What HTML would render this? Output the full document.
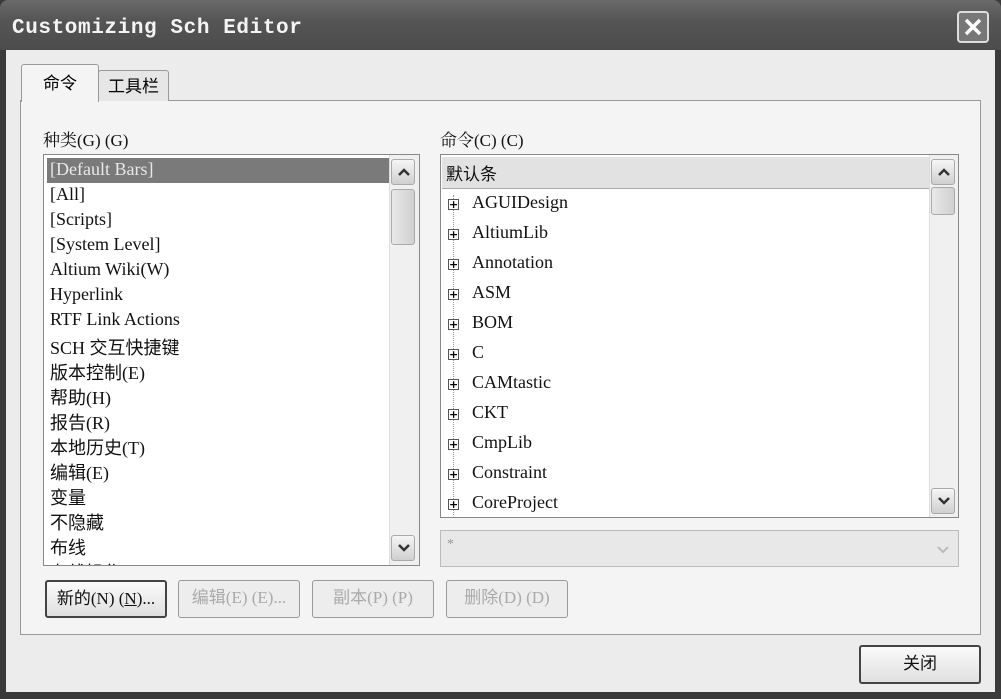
<!DOCTYPE html>
<html><head><meta charset="utf-8"><style>
*{box-sizing:border-box;margin:0;padding:0}
body{width:1001px;height:699px;background:#3a3a3a;font-family:"Liberation Serif","Noto Serif CJK SC",serif;position:relative;overflow:hidden}
.abs{position:absolute}
#title{left:0;top:0;width:1001px;height:50px;background:linear-gradient(#6a6a6a,#555 40%,#4c4c4c);border-radius:8px 8px 0 0}
#title span{position:absolute;left:12px;top:17px;color:#f4f4f4;font-family:"Liberation Mono",monospace;font-weight:bold;font-size:21px;letter-spacing:0.6px}
#close{left:957px;top:11px;width:32px;height:32px;border:2px solid #ddd;border-radius:4px;background:#777}
#body{left:6px;top:50px;width:989px;height:642px;background:#ececec}
.tab{background:#f2f2f2;border:1px solid #999;border-bottom:none;border-radius:3px 3px 0 0;font-family:"Noto Sans CJK SC",sans-serif;font-size:17px;text-align:center}
#panel{left:20px;top:100px;width:961px;height:535px;border:1px solid #999;background:#f4f4f4}
.lbl{font-size:17px;color:#111}
.list{background:#fff;border:1px solid #888}
.sb{background:#f0f0f0;border-left:1px solid #ddd}
.arr{position:absolute;left:1px;width:24px;height:26px;background:linear-gradient(#f6f6f6,#cfcfcf);border:1px solid #aaa;border-radius:3px}
.arr svg{position:absolute;left:5px;top:6px}
.thumb{position:absolute;left:1px;width:24px;background:linear-gradient(90deg,#e8e8e8,#d0d0d0);border:1px solid #aaa;border-radius:3px}
.it{position:absolute;left:6px;font-size:18px;color:#111;white-space:nowrap;font-family:"Liberation Serif","Noto Sans CJK SC",serif}
.pl{position:absolute;left:7px;width:11px;height:11px;border:1px solid #555;background:#fff;font-size:11px;line-height:9px;text-align:center;font-family:"DejaVu Sans",sans-serif;font-weight:bold}
.btn{border:1px solid #999;border-radius:3px;background:#ededed;font-size:17px;text-align:center;line-height:34px;color:#aaa;font-family:"Liberation Serif","Noto Sans CJK SC",serif;white-space:nowrap}
</style></head><body>
<div class="abs" id="title"><span>Customizing Sch Editor</span></div>
<div class="abs" id="close"><svg width="28" height="28"><path d="M7 7L21 21M21 7L7 21" stroke="#fff" stroke-width="3.5"/></svg></div>
<div class="abs" id="body"></div>
<div class="abs" id="panel"></div>
<div class="abs tab" style="left:98px;top:70px;width:71px;height:31px;line-height:28px;background:#e6e6e6">工具栏</div>
<div class="abs tab" style="left:21px;top:64px;width:78px;height:38px;line-height:34px;background:#f4f4f4">命令</div>
<div class="abs lbl" style="left:43px;top:126px">种类(G) (G)</div>
<div class="abs lbl" style="left:440px;top:126px">命令(C) (C)</div>

<div class="abs list" style="left:43px;top:154px;width:377px;height:412px;overflow:hidden">
<div class="abs" style="left:3px;top:3px;width:342px;height:25px;background:#7a7a7a"></div>
<div class="it" style="top:4px;color:#e8e8e8">[Default Bars]</div>
<div class="it" style="top:29px">[All]</div>
<div class="it" style="top:54px">[Scripts]</div>
<div class="it" style="top:79px">[System Level]</div>
<div class="it" style="top:104px">Altium Wiki(W)</div>
<div class="it" style="top:129px">Hyperlink</div>
<div class="it" style="top:154px">RTF Link Actions</div>
<div class="it" style="top:179px">SCH 交互快捷键</div>
<div class="it" style="top:204px">版本控制(E)</div>
<div class="it" style="top:229px">帮助(H)</div>
<div class="it" style="top:254px">报告(R)</div>
<div class="it" style="top:279px">本地历史(T)</div>
<div class="it" style="top:304px">编辑(E)</div>
<div class="it" style="top:329px">变量</div>
<div class="it" style="top:354px">不隐藏</div>
<div class="it" style="top:379px">布线</div>
<div class="it" style="top:404px">布线操作</div>
<div class="abs sb" style="left:345px;top:0;width:30px;height:410px">
<div class="arr" style="top:4px"><svg width="14" height="12"><path d="M2 9L7 4L12 9" stroke="#333" stroke-width="2.5" fill="none"/></svg></div>
<div class="thumb" style="top:34px;height:56px"></div>
<div class="arr" style="top:380px"><svg width="14" height="12"><path d="M2 3L7 8L12 3" stroke="#333" stroke-width="2.5" fill="none"/></svg></div></div>
</div>

<div class="abs list" style="left:440px;top:154px;width:519px;height:364px;overflow:hidden">
<div class="abs" style="left:1px;top:2px;width:488px;height:32px;background:#e2e2e2;border-bottom:1px solid #aaa"></div>
<div class="it" style="top:5px;left:5px;font-family:'Noto Sans CJK SC',sans-serif;font-size:17px">默认条</div>
<div class="abs" style="left:12px;top:40px;height:320px;border-left:1px dotted #999"></div>
<div class="pl" style="top:44px">+</div><div class="it" style="left:31px;top:37px">AGUIDesign</div>
<div class="pl" style="top:74px">+</div><div class="it" style="left:31px;top:67px">AltiumLib</div>
<div class="pl" style="top:104px">+</div><div class="it" style="left:31px;top:97px">Annotation</div>
<div class="pl" style="top:134px">+</div><div class="it" style="left:31px;top:127px">ASM</div>
<div class="pl" style="top:164px">+</div><div class="it" style="left:31px;top:157px">BOM</div>
<div class="pl" style="top:194px">+</div><div class="it" style="left:31px;top:187px">C</div>
<div class="pl" style="top:224px">+</div><div class="it" style="left:31px;top:217px">CAMtastic</div>
<div class="pl" style="top:254px">+</div><div class="it" style="left:31px;top:247px">CKT</div>
<div class="pl" style="top:284px">+</div><div class="it" style="left:31px;top:277px">CmpLib</div>
<div class="pl" style="top:314px">+</div><div class="it" style="left:31px;top:307px">Constraint</div>
<div class="pl" style="top:344px">+</div><div class="it" style="left:31px;top:337px">CoreProject</div>
<div class="abs sb" style="left:488px;top:0;width:30px;height:362px">
<div class="arr" style="top:4px"><svg width="14" height="12"><path d="M2 9L7 4L12 9" stroke="#333" stroke-width="2.5" fill="none"/></svg></div>
<div class="thumb" style="top:32px;height:28px"></div>
<div class="arr" style="top:333px"><svg width="14" height="12"><path d="M2 3L7 8L12 3" stroke="#333" stroke-width="2.5" fill="none"/></svg></div></div>
</div>

<div class="abs" style="left:440px;top:530px;width:519px;height:37px;border:1px solid #bbb;background:#e8e8e8;color:#999;font-size:14px;padding:6px 6px">*<svg style="position:absolute;right:8px;top:13px" width="14" height="12"><path d="M2 3L7 8L12 3" stroke="#bbb" stroke-width="2" fill="none"/></svg></div>

<div class="abs btn" style="left:45px;top:580px;width:122px;height:38px;color:#111;border:2px solid #444;background:linear-gradient(#fafafa,#e0e0e0)">新的(N) (<u>N</u>)...</div>
<div class="abs btn" style="left:178px;top:580px;width:122px;height:38px">编辑(E) (E)...</div>
<div class="abs btn" style="left:312px;top:580px;width:122px;height:38px">副本(P) (P)</div>
<div class="abs btn" style="left:446px;top:580px;width:122px;height:38px">删除(D) (D)</div>
<div class="abs btn" style="left:859px;top:645px;width:122px;height:39px;color:#111;border:2px solid #444;background:linear-gradient(#fafafa,#e0e0e0)">关闭</div>
</body></html>
